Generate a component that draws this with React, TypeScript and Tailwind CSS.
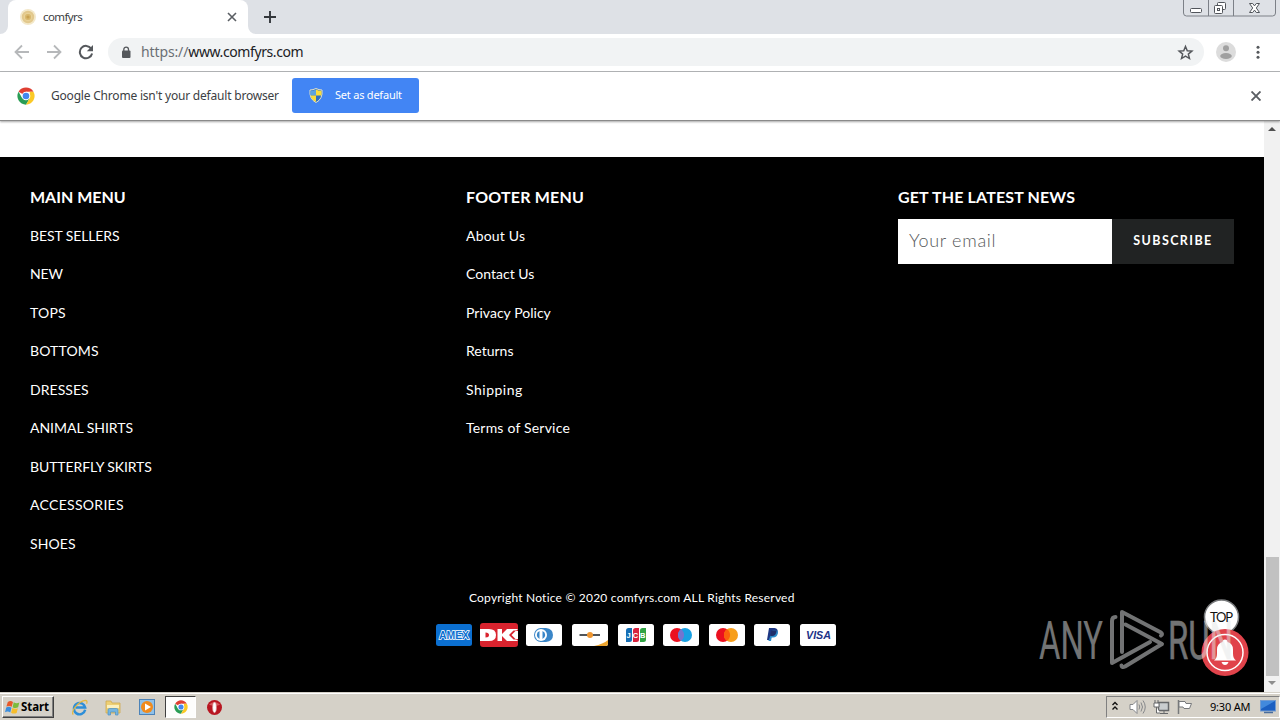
import type { ReactNode } from 'react';

const ui = "font-['Noto_Sans','Open_Sans',sans-serif]";

function ChromeLogo({ className }: { className: string }) {
  return (
    <svg viewBox="0 0 48 48" className={className}>
      <circle cx="24" cy="24" r="23" fill="#fff" />
      <path d="M24 24 4.1 12.5A23 23 0 0 1 43.9 12.5H24z" fill="#df3f32" />
      <path d="M4.1 12.5A23 23 0 0 0 24 47L34 29.7 24 24 14 29.7z" fill="#2a9d55" />
      <path d="M43.9 12.5A23 23 0 0 1 24 47L34 29.7 34 12.5z" fill="#fbc926" />
      <circle cx="24" cy="24" r="11.5" fill="#fff" />
      <circle cx="24" cy="24" r="8.8" fill="#4387ee" />
    </svg>
  );
}

function TabStrip() {
  return (
    <div className="flex h-[34px] items-start bg-[#dee1e6]">
      <svg viewBox="0 0 8 34" className="h-[34px] w-2 shrink-0"><path d="M8 26v8H0a8 8 0 0 0 8-8z" fill="#fff" /></svg>
      <div className="flex h-[34px] w-[240px] items-center rounded-t-lg bg-white pl-[12px]">
        <svg viewBox="0 0 16 16" className="size-4">
          <circle cx="8" cy="8" r="8" fill="#f3e8c9" />
          <circle cx="8" cy="8" r="6.2" fill="#e2c88c" />
          <circle cx="8" cy="8" r="3.8" fill="#d9b96f" stroke="#ebd59d" />
          <circle cx="8" cy="8" r="1.6" fill="#c9a251" />
        </svg>
        <span className="ml-[7px] w-[184px] text-[11.5px] leading-4 tracking-[-0.6px] text-[#3c4043]">comfyrs</span>
        <svg viewBox="0 0 10 10" className="size-[10px]"><path d="M1 1l8 8M9 1L1 9" stroke="#5a5e63" strokeWidth="1.6" /></svg>
      </div>
      <svg viewBox="0 0 8 34" className="h-[34px] w-2 shrink-0"><path d="M0 26v8h8a8 8 0 0 1-8-8z" fill="#fff" /></svg>
      <svg viewBox="0 0 12 12" className="mt-[11px] ml-2 size-3"><path d="M6 0v12M0 6h12" stroke="#33373c" strokeWidth="1.9" /></svg>
      <svg viewBox="0 0 93 17" className="ml-auto mr-1 h-[17px] w-[93px]" fill="none" stroke="#7c8087">
        <path d="M.5 0v13q0 3 3 3h86q3 0 3-3V0M25.5 0v16M50.5 0v16" />
        <g stroke="#51555b">
          <rect x="7.5" y="8.5" width="11" height="4" rx="1" fill="#fff" />
          <rect x="34.5" y="2.5" width="8" height="7" rx="1" fill="#fff" />
          <rect x="31.5" y="5.5" width="8" height="8" rx="1" fill="#fff" />
          <rect x="34.5" y="8.5" width="2" height="2" />
          <path d="M66.5 3.500h3.200l1.800 2.400 1.800-2.400h3.200L73.300 8l3.200 4.500h-3.200l-1.800-2.400-1.800 2.400h-3.200L69.700 8z" fill="#fff" />
        </g>
      </svg>
    </div>
  );
}

function Toolbar() {
  return (
    <div className="flex h-[38px] items-center border-b border-[#b4b6b8] bg-white pb-px pl-[14px]">
      <svg viewBox="0 0 16 16" className="size-4" fill="none" stroke="#b6b8ba" strokeWidth="1.8"><path d="M15 8H2M8 1.5L1.5 8 8 14.5" /></svg>
      <svg viewBox="0 0 16 16" className="ml-4 size-4" fill="none" stroke="#b6b8ba" strokeWidth="1.8"><path d="M1 8h13M8 1.5L14.5 8 8 14.5" /></svg>
      <svg viewBox="0 0 16 16" className="ml-4 size-4">
        <path d="M13.2 4.600A6.200 6.200 0 1 0 14.100 9.500" fill="none" stroke="#55585c" strokeWidth="2" />
        <path d="M15 1v6.200H8.800z" fill="#55585c" />
      </svg>
      <div className="ml-[14px] flex h-[28px] w-[1096px] items-center rounded-full bg-[#f1f3f4] pl-[13px] pr-[10px]">
        <svg viewBox="0 0 10 13" className="h-[13px] w-[10px]">
          <rect x="1" y="4.5" width="8.5" height="7.5" rx="1" fill="#55585c" />
          <path d="M2.8 5V3.400a2.300 2.300 0 0 1 4.700 0V5" fill="none" stroke="#55585c" strokeWidth="1.3" />
        </svg>
        <span className="ml-[10px] text-[14px] leading-5 text-[#202124]"><span className="tracking-[-0.12px] text-[#6b6f74]">https://</span><span className="tracking-[-0.4px]">www.comfyrs.com</span></span>
        <svg viewBox="0 0 24 24" className="ml-auto size-[17px]" fill="none" stroke="#55585c" strokeWidth="2.1"><path d="M12 3.500l2.500 6 6.500.5-5 4.200 1.600 6.300L12 17.100l-5.600 3.400L8 14.200 3 10l6.500-.5z" /></svg>
      </div>
      <svg viewBox="0 0 20 20" className="ml-3 size-5">
        <circle cx="10" cy="10" r="10" fill="#dcdcdc" />
        <circle cx="10" cy="6.2" r="3" fill="#a0a0a0" />
        <ellipse cx="10" cy="14" rx="5.8" ry="3" fill="#a0a0a0" />
      </svg>
      <svg viewBox="0 0 4 14" className="ml-[20px] h-[14px] w-1" fill="#55585c"><circle cx="2" cy="2.2" r="1.5" /><circle cx="2" cy="7.2" r="1.5" /><circle cx="2" cy="12.2" r="1.5" /></svg>
    </div>
  );
}

function InfoBar() {
  return (
    <div className="relative z-10 flex h-[49px] items-center border-b border-[#8a8a8a] bg-white pb-px pl-[17px] shadow-[0_1px_2px_rgba(0,0,0,0.35)]">
      <ChromeLogo className="size-[18px]" />
      <span className="ml-4 w-[241px] text-[12px] leading-5 tracking-[-0.2px] whitespace-nowrap text-[#3c4043]">Google Chrome isn't your default browser</span>
      <button className="flex h-[35px] w-[127px] items-center rounded-[3px] bg-[#4285f4] pl-[17px] text-[11px] tracking-[-0.22px] text-white">
        <svg viewBox="0 0 14 15" className="mr-[12px] h-[15px] w-[14px]">
          <path d="M7 .5Q10 2 13 2q1 9-6 12.500Q0 11 1 2 4 2 7 .5z" fill="#2f6fc0" stroke="#e3e2c8" />
          <path d="M7 1.500v6H1.500Q1.300 5 1.600 2.700 5 2.700 7 1.500z" fill="#5ba3e0" />
          <path d="M7 1.500Q9 2.700 12.400 2.700q.3 2.300 0 4.800H7zM7 7.500v6.300Q2.500 12 1.500 7.500z" fill="#f8dc3c" />
        </svg>
        <span className="whitespace-nowrap">Set as default</span>
      </button>
      <svg viewBox="0 0 10 10" className="ml-auto mr-[19px] size-[10px]"><path d="M.5.5l9 9M9.500.5l-9 9" stroke="#5a5e63" strokeWidth="1.9" /></svg>
    </div>
  );
}

const mainLinks: [string, string][] = [
  ['BEST SELLERS', 'tracking-[-0.1px]'],
  ['NEW', 'tracking-[-0.1px]'],
  ['TOPS', 'tracking-[0.2px]'],
  ['BOTTOMS', 'tracking-[0.15px]'],
  ['DRESSES', 'tracking-[0.05px]'],
  ['ANIMAL SHIRTS', 'tracking-[-0.03px]'],
  ['BUTTERFLY SKIRTS', 'tracking-[-0.1px]'],
  ['ACCESSORIES', 'tracking-[0.3px]'],
  ['SHOES', 'tracking-[0.1px]'],
];
const footerLinks: [string, string][] = [
  ['About Us', 'tracking-[0.2px]'],
  ['Contact Us', 'tracking-[0.03px]'],
  ['Privacy Policy', 'tracking-[0.03px]'],
  ['Returns', 'tracking-[0px]'],
  ['Shipping', 'tracking-[0.5px]'],
  ['Terms of Service', 'tracking-[0.2px]'],
];

function MenuColumn({ title, links, className, titleClass }: { title: string; links: [string, string][]; className: string; titleClass: string }) {
  return (
    <nav className={className}>
      <h2 className={`h-[18.75px] text-[16px] leading-[17px] font-bold ${titleClass}`}>{title}</h2>
      <ul>
        {links.map(([label, tracking]) => (
          <li key={label} className={`h-[38.5px] pt-[19px] text-[14px] leading-[20px] ${tracking}`}>{label}</li>
        ))}
      </ul>
    </nav>
  );
}

function Card({ bg = '#fff', children }: { bg?: string; children: ReactNode }) {
  return (
    <svg viewBox="0 0 36 22" className="h-[22px] w-9 shrink-0">
      <rect width="36" height="22" rx="2.5" fill={bg} />
      {children}
    </svg>
  );
}

function Payments() {
  return (
    <div className="ml-[436px] flex h-6 w-[400px] items-center justify-between">
      <Card bg="#0b6fd0">
        <text x="3" y="15" textLength="30" lengthAdjust="spacingAndGlyphs" fontFamily="Liberation Sans" fontWeight="700" fontSize="11" fill="#0b6fd0" stroke="#fff" strokeWidth="1.5" paintOrder="stroke">AMEX</text>
      </Card>
      <svg viewBox="0 0 38 24" className="-mr-px -ml-[2px] h-6 w-[38px] shrink-0">
        <rect width="38" height="24" rx="3" fill="#d9232e" />
        <path d="M0 6h9q7 0 7 6t-7 6H0z" fill="#fff" />
        <path d="M5.5 9.500v5q3.500 0 3.500-2.500t-3.500-2.500z" fill="#d9232e" />
        <path d="M17.5 6H22v5l5-5h11l-5.500 6 5.500 6H27l-5-5v5h-4.500z" fill="#fff" />
        <path d="M29 12l4.500-4.500H38v9h-4.500z" fill="#d9232e" />
        <path d="M31.500 12l4-4H38v8h-2.500z" fill="#fff" />
      </svg>
      <Card>
        <path d="M14 4h6q7 1 7 7t-7 7h-6z" fill="#3a86c8" />
        <circle cx="15" cy="11" r="7" fill="#3a86c8" /><circle cx="15" cy="11" r="6" fill="#fff" />
        <path d="M13.5 7v8a4.300 4.300 0 0 1 0-8zM16.500 7v8a4.300 4.300 0 0 0 0-8z" fill="#3a86c8" />
      </Card>
      <Card>
        <path d="M22 22q9-2 14-6v3.500q0 2.500-2.500 2.500z" fill="#eda52f" />
        <path d="M7.500 11h20.500" stroke="#3d4248" strokeWidth="1.8" />
        <circle cx="18" cy="11" r="3" fill="#ef9630" />
      </Card>
      <Card>
        <path d="M8 6.500Q8 4 10.500 4H14v11.500q0 2.500-2.500 2.500H8z" fill="#176fb5" />
        <path d="M15 6.500Q15 4 17.500 4H21v11.500q0 2.500-2.500 2.500H15z" fill="#d9223e" />
        <path d="M22 6.500Q22 4 24.500 4H28v11.500q0 2.500-2.500 2.500H22z" fill="#2fa343" />
        <text x="8.5" y="14" textLength="19" fontFamily="Liberation Sans" fontWeight="700" fontSize="7.5" fill="#fff">JCB</text>
      </Card>
      <Card>
        <circle cx="14" cy="11" r="7" fill="#eb101f" /><circle cx="22" cy="11" r="7" fill="#18a0e3" />
        <path d="M18 5.200a7 7 0 0 1 0 11.600 7 7 0 0 1 0-11.600z" fill="#7375cf" />
      </Card>
      <Card>
        <circle cx="14" cy="11" r="7" fill="#eb101f" /><circle cx="22" cy="11" r="7" fill="#f79e1b" />
        <path d="M18 5.200a7 7 0 0 1 0 11.600 7 7 0 0 1 0-11.600z" fill="#fb5f0d" />
      </Card>
      <Card>
        <path d="M15 4h5.500q4 .5 3 5-1 3.800-5 3.800h-1.700L16 16h-3z" fill="#1d3783" />
        <path d="M18.500 6.500h4.800q1 1 .5 3-.8 4-4.800 4h-1.300l-.7 3.500h-2.600z" fill="#2b8bc9" />
        <path d="M17.500 6.500h5.200q-.7 5.500-4.500 5.500h-2z" fill="#1f2f6b" />
      </Card>
      <Card>
        <text x="6" y="15" textLength="25" lengthAdjust="spacingAndGlyphs" fontFamily="Liberation Sans" fontStyle="italic" fontWeight="700" fontSize="11.5" fill="#1c3287">VISA</text>
      </Card>
    </div>
  );
}

function Footer() {
  return (
    <footer className="flex h-[535px] flex-col bg-black pt-[31px] font-['Lato',sans-serif] text-white">
      <div className="flex h-[400px] pl-[30px]">
        <MenuColumn title="MAIN MENU" links={mainLinks} className="w-[436px]" titleClass="" />
        <MenuColumn title="FOOTER MENU" links={footerLinks} className="w-[432px]" titleClass="tracking-[0.2px]" />
        <section>
          <h2 className="h-[19px] text-[16px] leading-[17px] font-bold tracking-[0.15px]">GET THE LATEST NEWS</h2>
          <form className="mt-3 flex h-[45px]">
            <div className="flex w-[214px] items-center bg-white pb-[2px] pl-[11px] text-[18px] font-light tracking-[0.7px] text-[#55585a]">Your email</div>
            <button type="button" className="w-[122px] bg-[#212323] pb-px text-[12.5px] font-bold tracking-[1.4px]">SUBSCRIBE</button>
          </form>
        </section>
      </div>
      <p className="h-[20px] pl-[469px] text-[12px] leading-[20px] tracking-[0.21px] whitespace-nowrap">Copyright Notice © 2020 comfyrs.com ALL Rights Reserved</p>
      <div className="mt-[15px]"><Payments /></div>
    </footer>
  );
}

function Overlay() {
  return (
    <div className="absolute top-[478px] left-[1030px] h-[84px] w-[222px]">
      <svg viewBox="0 0 222 84" className="size-full">
        <circle cx="191.5" cy="18" r="17" fill="#fff" stroke="#77797b" strokeWidth="1.5" />
        <circle cx="195" cy="53.5" r="23.5" fill="#e0434b" />
        <circle cx="195" cy="53.5" r="18" fill="none" stroke="#fff" strokeWidth="1.5" />
        <path d="M184 61.500q3-2 3-7v-4q0-6 5.500-7.500 0-2.500 2.500-2.500t2.500 2.500q5.500 1.500 5.500 7.500v4q0 5 3 7zM191.500 63h7q-1 3-3.500 3t-3.500-3z" fill="#fff" />
        <g opacity=".5" fill="#e4e6e7" fontFamily="Roboto" fontSize="53">
          <text x="9" y="60" textLength="64" lengthAdjust="spacingAndGlyphs">ANY</text>
          <text x="138" y="60" textLength="65" lengthAdjust="spacingAndGlyphs" stroke="#e4e6e7" strokeWidth=".5">RUN</text>
          <g fill="none" stroke="#e4e6e7" strokeWidth="4" strokeLinejoin="round" strokeLinecap="round">
            <path d="M85.5 18Q82 18 82 22v42l38-21" />
            <path d="M92 53V13l39 20.500q2 1.500 0 3" />
            <path d="M95.5 25.500L132 45 95 67.500q-3 1.500-3.500-1" />
          </g>
        </g>
        <text x="180" y="23" textLength="23" fontFamily="Lato" fontSize="13" fill="#111">TOP</text>
      </svg>
    </div>
  );
}

function ScrollBar() {
  return (
    <div className="flex w-4 flex-col items-center bg-[#f1f1f1]">
      <svg viewBox="0 0 16 16" className="size-4"><path d="M4 10l4-4 4 4z" fill="#505050" /></svg>
      <div className="mt-[420px] h-[119px] w-[13px] bg-[#c1c1c1]" />
      <svg viewBox="0 0 16 16" className="size-4"><path d="M4 5l4 4 4-4z" fill="#8d8d8d" /></svg>
    </div>
  );
}

function TaskBar() {
  return (
    <div className="flex h-7 items-start border-t border-[#d5d1c8] bg-[#d5d1c8] shadow-[inset_0_1px_0_#fff]">
      <button className="mt-[3px] ml-[2px] flex h-[22px] w-[52px] items-center border border-t-white border-r-[#404040] border-b-[#404040] border-l-white pl-[2px] text-[11.5px] font-bold tracking-[-0.1px] text-black shadow-[inset_-1px_-1px_0_#808080]">
        <svg viewBox="0 0 16 16" className="mr-px size-[15px] shrink-0">
          <path d="M3 2q3-2 5.500 0L7.200 7.200Q4.500 5.500 1.500 7z" fill="#e8592a" />
          <path d="M9.300 2.400q3 1.800 6 .2L14 7.800q-3 1.500-5.900-.2z" fill="#7cbb3c" />
          <path d="M1.300 8q3-1.500 5.600.2L5.600 13.200Q3 11.500 0 13z" fill="#3b8ede" />
          <path d="M7.800 8.600q3 1.600 5.900.2l-1.300 5q-3 1.500-5.900-.2z" fill="#f6bd2b" />
        </svg>
        Start
      </button>
      <svg viewBox="0 0 18 18" className="mt-[6px] ml-[17px] size-[17px]" fill="none">
        <path d="M15 11.500A6 6 0 1 1 15 9H5" stroke="#2d8ed8" strokeWidth="2.6" />
        <path d="M2.500 16.500C-1 14 7 3 15 1.500q3 0 1.500 3.500" stroke="#e5b83f" strokeWidth="1.3" />
      </svg>
      <svg viewBox="0 0 16 17" className="mt-[6px] ml-[17px] h-[17px] w-4">
        <path d="M1 2h5l1 2h8v10H1z" fill="#edcf75" stroke="#cfaa4e" strokeWidth=".8" />
        <path d="M2 6h12v3H2z" fill="#fbf0be" />
        <path d="M3 16v-5q0-1.500 1.500-1.500h7Q13 9.500 13 11v5h-2.500v-3h-5v3z" fill="#76b5df" stroke="#4c91c5" strokeWidth=".7" />
      </svg>
      <svg viewBox="0 0 16 16" className="mt-[6px] ml-[18px] size-4">
        <rect x=".5" y=".5" width="15" height="15" fill="#8fc1e9" stroke="#4c83b8" />
        <circle cx="8" cy="8" r="6" fill="#f08b1d" /><path d="M6 4.500l6 3.500-6 3.500z" fill="#fff" />
      </svg>
      <div className="mt-[3px] ml-[10px] flex h-[22px] w-[31px] items-center justify-center border border-t-[#404040] border-r-white border-b-white border-l-[#404040] bg-[#fdfdfc]">
        <ChromeLogo className="size-[14px]" />
      </div>
      <svg viewBox="0 0 16 16" className="mt-[7px] ml-[11px] size-[15px]">
        <circle cx="8" cy="8" r="8" fill="#b81621" /><path d="M2 5q6-6 12 0-5 2-12 0z" fill="#d6575c" /><ellipse cx="8" cy="8" rx="2" ry="5.5" fill="#fff" stroke="#d7a1a1" strokeWidth=".6" />
      </svg>
      <div className="mt-[3px] ml-auto flex h-[22px] w-[174px] items-center border border-t-[#808080] border-r-white border-b-white border-l-[#808080] pl-[4px] text-[11px] tracking-[-0.2px] text-black">
        <svg viewBox="0 0 8 10" className="mb-[2px] h-[10px] w-2" fill="none" stroke="#111" strokeWidth="1.4"><path d="M1.5 4L4 1.500 6.500 4M1.500 8.500L4 6l2.500 2.500" /></svg>
        <svg viewBox="0 0 17 16" className="ml-[10px] h-4 w-[17px]" fill="none" stroke="#85878a">
          <path d="M1 5.500h3l4-4v13l-4-4H1z" fill="#fff" /><path d="M10 5.500q1.500 2.500 0 5M12 3.500q3 4.500 0 9M14 1.500q4.500 6.500 0 13" />
        </svg>
        <svg viewBox="0 0 17 16" className="ml-[7px] h-4 w-[17px]" fill="none" stroke="#66686a">
          <rect x="5.5" y="3.5" width="10" height="8" fill="#c9cdcf" strokeWidth="1.5" /><path d="M7 14.500h8M11 12v2" />
          <path d="M2 1v3M5 1v3M1 4h5v4H1zM3.500 8v6H7" fill="#fff" />
        </svg>
        <svg viewBox="0 0 17 16" className="ml-[6px] h-4 w-[17px]" fill="none" stroke="#77797b"><path d="M2.500 1v14" strokeWidth="1.5" /><path d="M3 2.500h6l1 2h5.500l-2 5H8l-1-1.500H3z" fill="#fff" /></svg>
        <span className="ml-[17px] w-[41px] whitespace-nowrap">9:30 AM</span>
        <svg viewBox="0 0 16 14" className="ml-[9px] h-[14px] w-4"><rect x=".5" y=".5" width="15" height="10.5" fill="#1b5fc1" stroke="#729bd0" /><path d="M1 1h14L1 9z" fill="#4289dc" /><path d="M4 12.500h9" stroke="#496d9d" strokeWidth="1.5" /></svg>
      </div>
    </div>
  );
}

export default function App() {
  return (
    <div className={`flex h-[720px] w-[1280px] flex-col overflow-hidden bg-white ${ui}`}>
      <TabStrip />
      <Toolbar />
      <InfoBar />
      <div className="relative flex h-[571px]">
        <main className="w-[1264px] pt-9">
          <Footer />
        </main>
        <ScrollBar />
        <Overlay />
      </div>
      <TaskBar />
    </div>
  );
}
